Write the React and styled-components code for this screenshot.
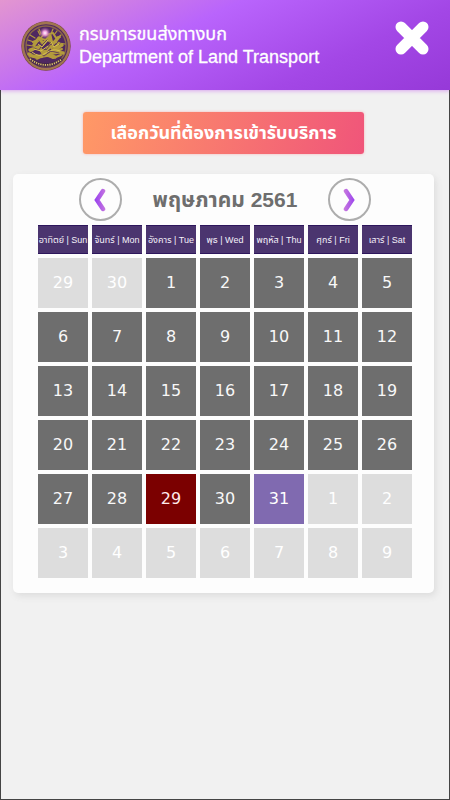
import React from "react";
import styled, { createGlobalStyle } from "styled-components";

const GlobalStyle = createGlobalStyle`
  * { box-sizing: border-box; }
  body {
    margin: 0;
    background: #f1f1f1;
    font-family: "Liberation Sans", "Noto Sans Thai", sans-serif;
  }
  button { font: inherit; cursor: pointer; }
`;

const Page = styled.div`
  min-height: 100vh;
  display: flex;
  flex-direction: column;
  background: #f1f1f1;
`;

const Header = styled.header`
  height: 90px;
  padding: 2px 20px 0 21px;
  display: flex;
  align-items: center;
  gap: 8px;
  color: #fff;
  background: linear-gradient(155deg, #e396d0 0%, #b964fc 38%, #a347e6 72%, #9639d8 100%);
  box-shadow: 0 1px 4px #d9a5ee;
`;

const Brand = styled.div`
  flex: 1;
  font-size: 18px;
  line-height: 23px;
  white-space: nowrap;
`;

const BrandLine = styled.div`
  -webkit-text-stroke: 0.3px #fff;
`;

const CloseButton = styled.button`
  width: 36px;
  height: 36px;
  margin-bottom: 16px;
  padding: 0;
  border: 0;
  background: none;
  svg { display: block; }
`;

const Main = styled.main`
  flex: 1;
  display: flex;
  flex-direction: column;
  padding: 22px 15px 20px 12px;
  border: solid #444;
  border-width: 0 1px 1px;
`;

const Banner = styled.h1`
  align-self: center;
  width: 281px;
  height: 42px;
  margin: 0 0 20px;
  border-radius: 3px;
  color: #fff;
  font-size: 18px;
  line-height: 42px;
  text-align: center;
  white-space: nowrap;
  background: linear-gradient(105deg, #ff9966 0%, #f0557a 100%);
  box-shadow: 0 0 3px #f7b4b4;
`;

const Card = styled.section`
  padding: 4px 18px 11px 21px;
  border-radius: 5px;
  background: #fdfdfd;
  box-shadow: 2px 3px 7px #dcdcdc;
`;

const MonthBar = styled.div`
  display: flex;
  align-items: center;
  justify-content: space-between;
  padding: 0 45px;
`;

const MonthTitle = styled.h2`
  margin: 0;
  color: #6e6e6e;
  font-size: 21px;
  line-height: 42px;
  white-space: nowrap;
`;

const ArrowButton = styled.button`
  width: 43px;
  height: 43px;
  padding: 0;
  display: grid;
  place-items: center;
  border: 2px solid #adadad;
  border-radius: 50%;
  background: transparent;
`;

const Calendar = styled.table`
  width: 100%;
  table-layout: fixed;
  border-spacing: 4px;
`;

const Weekday = styled.th`
  height: 29px;
  padding: 0;
  border: solid #2d165c;
  border-width: 1px 0;
  background: #4b356f;
  color: #f5f1fa;
  font-size: 9px;
  font-weight: 400;
  line-height: 12px;
  white-space: nowrap;
`;

const DayCell = styled.td`
  height: 50px;
  padding: 0;
`;

const tones = {
  open: ["#6e6e6e", "#f8f8f8"],
  outside: ["#dddddd", "#ffffff"],
  full: ["#7b0000", "#ffeaea"],
  selected: ["#806ab0", "#ffffff"],
};

const DayButton = styled.button`
  display: block;
  width: 100%;
  height: 50px;
  padding: 0;
  border: 0;
  background: ${(p) => tones[p.$tone][0]};
  color: ${(p) => tones[p.$tone][1]};
  font-family: "DejaVu Sans", sans-serif;
  font-size: 16px;
  line-height: 50px;
`;

function Emblem() {
  return (
    <svg width="50" height="50" viewBox="0 0 50 50" role="img" aria-label="กรมการขนส่งทางบก">
      <defs>
        <radialGradient id="gleam">
          <stop offset="0" stopColor="#fff" />
          <stop offset=".35" stopColor="#ed9edb" />
          <stop offset="1" stopColor="#8f4b94" stopOpacity="0" />
        </radialGradient>
      </defs>
      <circle cx="25" cy="25" r="24.7" fill="#744742" />
      <circle cx="25" cy="25" r="23" fill="#4f2860" stroke="#a07550" strokeWidth="2.4" />
      <circle cx="25" cy="25" r="20" fill="none" stroke="#8a6548" strokeWidth="1.4" />
      <g fill="none" stroke="#b39b3c" strokeLinecap="round" strokeLinejoin="round">
        <path strokeWidth="3.4" d="M8 33q8 5 17 1t17-2M9 29l8-3 6 6 7-8 6 3 5-3M13 24l5-7 4 6 7-8 2 9 6-7M16 37q9-5 18-1" />
        <path strokeWidth="2" d="M25 14l7-2 3 5 4-1M12 21l7-3 4-5M28 20l10 2-6 7 9-1M10 30l9-5 2 7 9-6 3 6 8-4M9 35l8 2 7-4 8 4 8-3M21 18l9 2" />
        <path strokeWidth="1.2" d="M9 14l5 3m4-9 2 5M32 8l-2 5m10 1-4 3M6 24l6 1m26-3 6 1M17 10l2 4M36 10l-3 4M7 19l6 2" />
      </g>
      <g fill="none" stroke="#55315b" strokeWidth=".8" strokeLinecap="round">
        <path d="M13 27l5 2 3-5 4 5 5-6 4 2M18 20l3 4 5-5m3 2 4 4 4-4M12 33l6-1 5 3 7-5 8 2" />
      </g>
      <path d="M11 31q7 6 14 1t14-2M17 23l4 3 6-7m3 2 3 5 5-3M13 28l7 2 7-5" fill="none" stroke="#d6c24d" />
      <path d="M9 38q16 12 32 0" fill="none" stroke="#432646" strokeWidth="3.2" />
      <path d="M9 38q16 12 32 0" fill="none" stroke="#d8be69" strokeWidth="1.8" strokeDasharray="1.3 1" />
      <circle cx="24" cy="12" r="6" fill="url(#gleam)" />
    </svg>
  );
}

function Chevron({ next }) {
  const id = next ? "nextTone" : "prevTone";
  return (
    <svg width="14" height="24" viewBox="0 0 14 24" aria-hidden="true">
      <defs>
        <linearGradient id={id} gradientUnits="userSpaceOnUse" x1={next ? 0 : 14} y1="0" x2={next ? 14 : 0} y2="0">
          <stop offset="0" stopColor="#d184db" />
          <stop offset="1" stopColor="#943cf0" />
        </linearGradient>
      </defs>
      <path
        d={next ? "M4 3 10 12 4 21" : "M9 3 3 12 9 21"}
        fill="none"
        stroke={`url(#${id})`}
        strokeWidth="4.5"
        strokeLinecap="round"
      />
    </svg>
  );
}

const weekdays = [
  "อาทิตย์ | Sun",
  "จันทร์ | Mon",
  "อังคาร | Tue",
  "พุธ | Wed",
  "พฤหัส | Thu",
  "ศุกร์ | Fri",
  "เสาร์ | Sat",
];

const days = Array.from({ length: 42 }, (_, i) => {
  if (i < 2) return { day: 29 + i, tone: "outside" };
  if (i > 32) return { day: i - 32, tone: "outside" };
  const day = i - 1;
  return { day, tone: day === 29 ? "full" : day === 31 ? "selected" : "open" };
});

const weeks = Array.from({ length: 6 }, (_, w) => days.slice(w * 7, w * 7 + 7));

export default function App() {
  return (
    <Page>
      <GlobalStyle />
      <Header>
        <Emblem />
        <Brand>
          <BrandLine>กรมการขนส่งทางบก</BrandLine>
          <BrandLine>Department of Land Transport</BrandLine>
        </Brand>
        <CloseButton aria-label="ปิด">
          <svg width="36" height="36" viewBox="0 0 36 36" aria-hidden="true">
            <path d="M7 7 29 29M29 7 7 29" stroke="#fff" strokeWidth="11" strokeLinecap="round" />
          </svg>
        </CloseButton>
      </Header>
      <Main>
        <Banner>เลือกวันที่ต้องการเข้ารับบริการ</Banner>
        <Card>
          <MonthBar>
            <ArrowButton aria-label="เดือนก่อนหน้า"><Chevron /></ArrowButton>
            <MonthTitle>พฤษภาคม 2561</MonthTitle>
            <ArrowButton aria-label="เดือนถัดไป"><Chevron next /></ArrowButton>
          </MonthBar>
          <Calendar>
            <thead>
              <tr>{weekdays.map((name) => <Weekday key={name} scope="col">{name}</Weekday>)}</tr>
            </thead>
            <tbody>
              {weeks.map((week, w) => (
                <tr key={w}>
                  {week.map(({ day, tone }) => (
                    <DayCell key={day}>
                      <DayButton $tone={tone}>{day}</DayButton>
                    </DayCell>
                  ))}
                </tr>
              ))}
            </tbody>
          </Calendar>
        </Card>
      </Main>
    </Page>
  );
}
